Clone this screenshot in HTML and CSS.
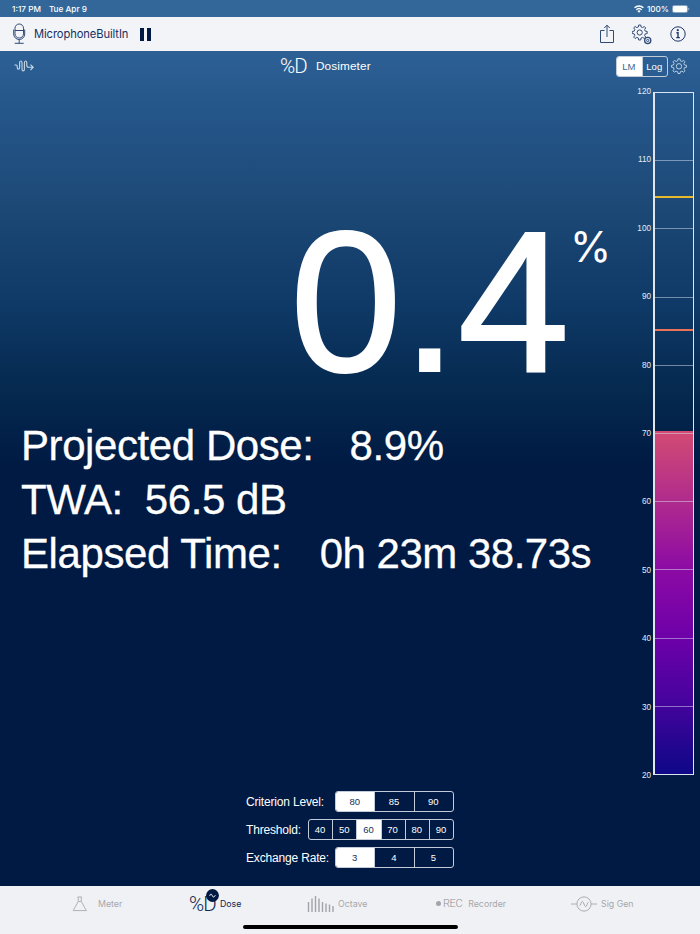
FILE: index.html
```html
<!DOCTYPE html>
<html lang="en">
<head>
  <meta charset="UTF-8">
  <title>Dosimeter</title>
  <link rel="stylesheet" href="styles.css">
</head>
<body>

  <div class="status">
    <span>1:17 PM</span>
    <span class="date">Tue Apr 9</span>
    <svg class="wifi" width="10" height="8" viewBox="0 0 10 8" fill="none" stroke="#fff" stroke-width="1.4">
      <path d="M.6 2.8a6.3 6.3 0 0 1 8.8 0M2.3 4.7a3.9 3.9 0 0 1 5.4 0"/>
      <path d="M5 7.8 3.4 6.1a2.3 2.3 0 0 1 3.2 0z" fill="#fff" stroke="none"/>
    </svg>
    <span>100%</span>
    <svg class="battery" width="18" height="8" viewBox="0 0 18 8">
      <rect x=".4" y=".4" width="15.2" height="7.2" rx="2" fill="none" stroke="#a9c0d6" stroke-width=".8"/>
      <rect x="1" y="1" width="14" height="6" rx="1.3" fill="#fff"/>
      <path d="M16.4 2.7v2.6q1-.4 1-1.3t-1-1.3z" fill="#a9c0d6"/>
    </svg>
  </div>

  <div class="toolbar">
    <svg class="mic" width="14" height="22" viewBox="0 0 14 22" fill="none" stroke="#304a76" stroke-width="1">
      <rect x="3" y="1" width="8.5" height="14" rx="4.2"/>
      <path d="M3 7.5h8.5M1.7 6.5V11a5.5 5.5 0 0 0 11 0V6.5M7.2 16.6v3.6M2.7 20.3h9"/>
    </svg>
    <span class="source">MicrophoneBuiltIn</span>
    <span class="pause"></span>
    <svg class="share" width="16" height="20" viewBox="0 0 16 20" fill="none" stroke="#304a76" stroke-width="1">
      <path d="M5.5 6.5h-4v12h13v-12h-4M8 13V1.2M5.3 4 8 1.2 10.7 4"/>
    </svg>
    <svg class="gears" width="20" height="21" viewBox="0 0 20 21" fill="none" stroke="#304a76" stroke-width="1">
      <path d="M6.7 1h2l.4 2 1.5.6 1.7-1.1 1.4 1.4-1.1 1.7.6 1.5 2 .4v2l-2 .4-.6 1.5 1.1 1.7-1.4 1.4-1.7-1.1-1.5.6-.4 2h-2l-.4-2-1.5-.6-1.7 1.1-1.4-1.4 1.1-1.7-.6-1.5-2-.4v-2l2-.4.6-1.5-1.1-1.7 1.4-1.4 1.7 1.1 1.5-.6z"/>
      <circle cx="7.7" cy="8.5" r="2.6"/>
      <circle cx="15.7" cy="16.5" r="3.1" stroke-width="1.3"/>
      <circle cx="15.7" cy="16.5" r="1.1"/>
    </svg>
    <svg class="info" width="16" height="16" viewBox="0 0 16 16" fill="none" stroke="#1d3869">
      <circle cx="8" cy="8" r="7.2" stroke-width="1"/>
      <path d="M6.4 6.8H8v4.7M6.2 11.6h3.7" stroke-width="1.4"/>
      <circle cx="7.8" cy="4.2" r="1.1" fill="#1d3869" stroke="none"/>
    </svg>
  </div>

  <div class="main">
    <div class="header">
      <svg class="wave" width="20" height="12" viewBox="0 0 20 12" fill="none" stroke="#c9d9e8" stroke-width="1.1">
        <path d="M.5 5h1.7q1 0 1 1.5v1q0 1.7 1.2 1.7t1.2-1.7V3q0-2 1.2-2T8 3v6q0 2 1.2 2t1.2-2V3q0-2 1.2-2t1.2 2v2.2q0 2.1 1.8 2.1h4.4M16.5 4.6l2.7 2.7-2.7 2.7"/>
      </svg>
      <span class="logo">%D</span>
      <span class="title">Dosimeter</span>
      <div class="segments scale">
        <span class="on">LM</span>
        <span>Log</span>
      </div>
      <svg class="gear" width="16" height="16" viewBox="0 0 16 16" fill="none" stroke="#b9cee0" stroke-width="1">
        <path d="M7 .9h2l.4 2 1.5.6 1.7-1.1L14 3.8l-1.1 1.7.6 1.5 2 .4v1.8l-2 .4-.6 1.5 1.1 1.7-1.4 1.4-1.7-1.1-1.5.6-.4 1.8H7l-.4-1.8-1.5-.6-1.7 1.1L2 12.8l1.1-1.7-.6-1.5-2-.4V7.4l2-.4.6-1.5L2 3.8l1.4-1.4 1.7 1.1 1.5-.6z"/>
        <circle cx="8" cy="8.3" r="2.7"/>
      </svg>
    </div>

    <div class="content">
      <div class="readings">
        <div class="dose"><span class="value">0.4</span><span class="unit">%</span></div>
        <div class="row"><span>Projected Dose:</span><span class="projected">8.9%</span></div>
        <div class="row"><span>TWA:</span><span class="twa">56.5 dB</span></div>
        <div class="row"><span>Elapsed Time:</span><span class="elapsed">0h 23m 38.73s</span></div>

        <div class="settings">
          <div class="setting">
            <span class="name">Criterion Level:</span>
            <div class="segments three"><span class="on">80</span><span>85</span><span>90</span></div>
          </div>
          <div class="setting">
            <span class="name">Threshold:</span>
            <div class="segments six"><span>40</span><span>50</span><span class="on">60</span><span>70</span><span>80</span><span>90</span></div>
          </div>
          <div class="setting">
            <span class="name">Exchange Rate:</span>
            <div class="segments three"><span class="on">3</span><span>4</span><span>5</span></div>
          </div>
        </div>
      </div>

      <div class="labels">
        <span>120</span><span>110</span><span>100</span><span>90</span><span>80</span><span>70</span>
        <span>60</span><span>50</span><span>40</span><span>30</span><span>20</span>
      </div>
      <div class="bar">
        <div class="fill"></div>
        <div class="lines"><i></i><i></i><i></i><i></i><i></i><i></i><i></i><i></i><i></i><i></i><i></i></div>
        <div class="mark peak"></div>
        <div class="mark limit"></div>
      </div>
    </div>
  </div>

  <div class="tabs">
    <div class="tab meter">
      <svg width="16" height="16" viewBox="0 0 16 16" fill="none" stroke="#b0b1b5" stroke-width="1">
        <path d="M5.5 1h4.4M6.2 1v4.5L1.2 14.6h13.2L9.3 5.500V1M6.2 5.5h3"/>
      </svg>
      <span>Meter</span>
    </div>
    <div class="tab dosetab">
      <span class="logo">%D</span>
      <svg class="badge" width="13" height="13" viewBox="0 0 13 13">
        <circle cx="6.5" cy="6.5" r="6.4" fill="#001a43"/>
        <path d="M3.7 6.9q.4-2 1.5-1.7c1.3.4 1 2.9 2.3 2.8q1.2-.1 1.8-1.8" fill="none" stroke="#e8edf5" stroke-width="1"/>
      </svg>
      <span>Dose</span>
    </div>
    <div class="tab octave">
      <svg width="28" height="18" viewBox="0 0 28 18" stroke="#a2a4a9" stroke-width="1.4">
        <path d="M1.5 17V7M5 17V3.5M8.5 17V1M12 17V3.5M15.5 17V7M19 17V8.5M22.5 17V9.5M26 17v-6"/>
      </svg>
      <span>Octave</span>
    </div>
    <div class="tab recorder">
      <i class="dot"></i><span class="rec">REC</span>
      <span>Recorder</span>
    </div>
    <div class="tab siggen">
      <svg width="26" height="16" viewBox="0 0 26 16" fill="none" stroke="#aaacb0" stroke-width="1">
        <circle cx="13" cy="8" r="7.1"/>
        <path d="M0 8h5.9M20.1 8H26M8.5 9.8c1.5 0 1.4-4.5 2.8-4.5s1.900 5.400 3.400 5.400 1.300-4.500 2.900-4.500"/>
      </svg>
      <span>Sig Gen</span>
    </div>
  </div>
  <div class="home"></div>

</body>
</html>
```

FILE: styles.css
```css
* {
  box-sizing: border-box;
}

body {
  margin: 0;
  width: 700px;
  height: 934px;
  display: flex;
  flex-direction: column;
  overflow: hidden;
  background: #f0f1f4;
  font-family: Inter, sans-serif;
  color: #fff;
}

svg {
  display: block;
  flex: none;
}

.status {
  height: 17px;
  padding: 0 10px 0 12px;
  display: flex;
  align-items: center;
  background: #33679a;
  font-size: 8.2px;
  font-weight: 500;
}

.date {
  margin-left: 8px;
}

.wifi {
  margin-left: auto;
  margin-right: 3px;
}

.battery {
  margin-left: 3px;
}

.toolbar {
  height: 34px;
  padding: 0 14px 0 12px;
  display: flex;
  align-items: center;
  background: #f2f4f8;
  color: #162f60;
}

.source {
  width: 97px;
  margin-left: 8px;
  font-size: 11.2px;
  letter-spacing: -0.1px;
}

.pause {
  width: 11px;
  height: 13px;
  margin-left: 9px;
  border: solid #001a43;
  border-width: 0 4px;
}

.share {
  margin-left: auto;
}

.gears {
  margin-left: 17px;
}

.info {
  margin-left: 18px;
}

.main {
  height: 835px;
  background: linear-gradient(#2d6095 0, #25568a 60px, #1c4875 160px, #0e3865 260px, #05294f 340px, #001a43 415px);
  font-family: "Liberation Sans", Arial, sans-serif;
}

.header {
  height: 30px;
  padding: 0 13px 0 14px;
  display: flex;
  align-items: center;
}

.logo {
  font-family: Roboto, sans-serif;
  font-weight: 300;
  font-size: 20.5px;
  letter-spacing: -1px;
}

.header .logo {
  width: 27px;
  margin-left: 246px;
  color: #fff;
}

.title {
  margin-left: 9px;
  font-size: 11.8px;
  letter-spacing: 0.1px;
}

.segments {
  display: flex;
  height: 21px;
  border: 1px solid #c3cbd8;
  border-radius: 3px;
  overflow: hidden;
  font-size: 9.5px;
}

.segments span {
  flex: 1;
  display: flex;
  align-items: center;
  justify-content: center;
  padding-right: 1px;
  border-right: 1px solid #c3cbd8;
}

.segments span:last-child {
  border-right: none;
}

.segments .on {
  background: #fff;
  color: #14305c;
}

.scale {
  width: 52px;
  margin-left: auto;
}

.scale .on {
  color: #376898;
}

.gear {
  margin-left: 3px;
}

.content {
  display: flex;
  height: 804px;
  padding: 10px 6px 0 0;
}

.readings {
  width: 630px;
  display: flex;
  flex-direction: column;
}

.dose {
  height: 328px;
  padding: 108px 0 0 290px;
  display: flex;
}

.value {
  width: 280px;
  font-size: 201px;
  line-height: 205px;
  -webkit-text-stroke: 2px #fff;
}

.unit {
  font-family: Inter, sans-serif;
  font-weight: 400;
  font-size: 42px;
  line-height: 95px;
}

.row {
  height: 54px;
  padding-left: 21px;
  font-size: 42px;
  line-height: 54px;
  letter-spacing: -0.42px;
  -webkit-text-stroke: 0.3px #fff;
  display: flex;
}

.projected {
  margin-left: 36px;
}

.twa {
  margin-left: 22px;
}

.elapsed {
  margin-left: 38px;
  letter-spacing: -0.5px;
}

.settings {
  width: 208px;
  margin: 210px 0 0 246px;
  display: flex;
  flex-direction: column;
  gap: 7px;
}

.setting {
  display: flex;
  justify-content: space-between;
  align-items: center;
}

.name {
  font-size: 12px;
  letter-spacing: -0.17px;
}

.three {
  width: 119px;
}

.six {
  width: 146px;
}

.labels {
  width: 21px;
  height: 695px;
  margin-top: -5px;
  display: flex;
  flex-direction: column;
  justify-content: space-between;
  text-align: right;
  font-size: 8.2px;
  line-height: 11px;
  color: #e6ecf3;
}

.bar {
  position: relative;
  width: 41px;
  height: 683px;
  margin: 1px 0 0 2px;
  border: solid #dfe6ef;
  border-width: 1px 1px 1px 2px;
}

.fill {
  position: absolute;
  left: 0;
  right: 0;
  bottom: 0;
  height: 343px;
  background: linear-gradient(#d24b73, #b02b8d 70px, #8b0aa5 140px, #6e00a8 205px, #45039d 272px, #0d0887);
}

.lines {
  position: absolute;
  inset: -1px 0;
  display: flex;
  flex-direction: column;
  justify-content: space-between;
}

.lines i {
  height: 1px;
  background: rgba(215, 225, 240, 0.5);
}

.mark {
  position: absolute;
  left: 0;
  right: 0;
  height: 2px;
}

.peak {
  top: 103px;
  background: #e8b82e;
}

.limit {
  top: 236px;
  background: #ec7156;
}

.tabs {
  height: 35px;
  display: flex;
  align-items: center;
  color: #a6a8ac;
  font-size: 8.8px;
}

.tab {
  position: relative;
  display: flex;
  align-items: center;
  width: 132px;
}

.meter {
  padding-left: 72px;
  width: 189px;
  gap: 10px;
}

.dosetab {
  width: 118px;
  color: #0d2856;
}

.dosetab .logo {
  width: 31px;
}

.badge {
  position: absolute;
  left: 17px;
  top: -3px;
}

.octave {
  width: 129px;
  gap: 3px;
}

.rec {
  margin: 0 6px 0 2px;
  font-family: Roboto, sans-serif;
  font-weight: 300;
  font-size: 11px;
  letter-spacing: -0.4px;
  color: #8f9196;
}

.dot {
  width: 5px;
  height: 5px;
  border-radius: 50%;
  background: #a2a4a8;
}

.recorder {
  width: 135px;
}

.siggen {
  width: 100px;
  gap: 4px;
}

.home {
  width: 215px;
  height: 4px;
  margin: 4px auto 0;
  border-radius: 2px;
  background: #000;
}
```
